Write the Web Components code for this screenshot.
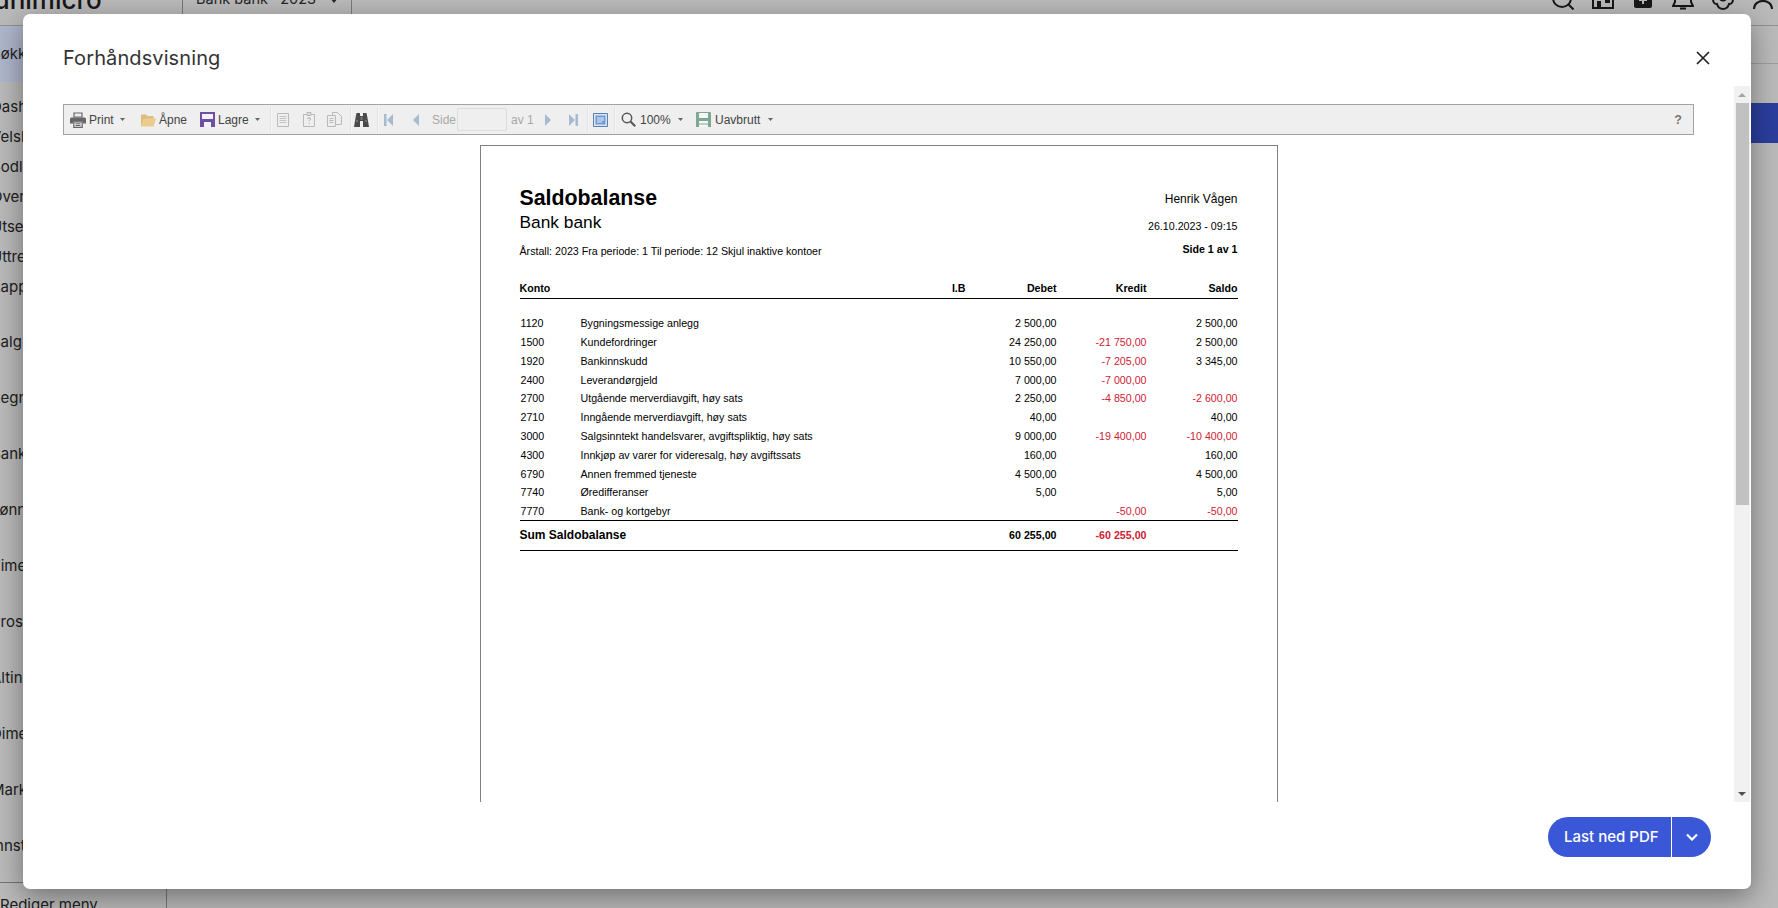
<!DOCTYPE html>
<html lang="no">
<head>
<meta charset="utf-8">
<title>Forhåndsvisning</title>
<style>
    html, body { margin: 0; height: 100%; overflow: hidden; background: #fff; }
</style>
</head>
<body>
<rs-app></rs-app>

<script>
class RsTopbar extends HTMLElement {
    constructor() {
        super();
        this.attachShadow({ mode: 'open' }).innerHTML = `
            <style>
                :host {
                    display: flex;
                    align-items: flex-end;
                    box-sizing: border-box;
                    height: 26px;
                    border-bottom: 1px solid #c8c8c8;
                    overflow: hidden;
                    font-family: Inter, sans-serif;
                    color: #222;
                }
                .logo {
                    width: 182px;
                    flex: none;
                    box-sizing: border-box;
                    margin-left: -6px;
                    margin-right: 6px;
                    font-size: 26px;
                    font-weight: 500;
                    line-height: 26px;
                    padding-bottom: 12px;
                }
                .company {
                    display: flex;
                    align-items: flex-end;
                    justify-content: space-between;
                    box-sizing: border-box;
                    width: 170px;
                    height: 25px;
                    padding: 0 13px 17px 13px;
                    border-left: 1px solid #a8a8a8;
                    border-right: 1px solid #a8a8a8;
                    font-size: 14.500px;
                    line-height: 18px;
                    color: #333;
                }
                .company svg { margin-bottom: 5px; }
                .icons {
                    margin-left: auto;
                    display: flex;
                    align-items: flex-end;
                    gap: 18px;
                    padding: 0 4px 15px 0;
                }
                .icons svg { display: block; width: 22px; height: 22px; }
            </style>
            <div class="logo">unimicro</div>
            <div class="company">
                <span>Bank bank · 2023</span>
                <svg width="8" height="5" viewBox="0 0 8 5"><path d="M0 0h8L4 5z" fill="#333"/></svg>
            </div>
            <div class="icons">
                <svg viewBox="0 0 22 22" fill="none" stroke="#222" stroke-width="2"><circle cx="10" cy="10" r="9"/><path d="M16.500 16.500L21.500 21.500"/></svg>
                <svg viewBox="0 0 22 22"><path d="M1 4h20v16H1z" fill="none" stroke="#222" stroke-width="2"/><path d="M5 13h4v7H5zM13 12h5v3h-5z" fill="#222"/></svg>
                <svg viewBox="0 0 22 22"><rect x="2" y="0" width="18" height="20" rx="2" fill="#222"/><path d="M11 8v8M7 12h8" stroke="#fff" stroke-width="2"/></svg>
                <svg viewBox="0 0 22 22" fill="none" stroke="#222" stroke-width="2"><path d="M3 0v14L1 18h20l-2-4V0"/><path d="M8 20.500h6"/></svg>
                <svg viewBox="0 0 22 22" fill="none" stroke="#222" stroke-width="2"><path d="M2 9C0 13 2 16.500 5 16C6 19.500 9 21 11 21C13 21 16 19.500 17 16C20 16.500 22 13 20 9"/><circle cx="11" cy="9" r="3.500"/></svg>
                <svg viewBox="0 0 22 22" fill="none" stroke="#222" stroke-width="2"><circle cx="11" cy="6" r="6"/><path d="M2 21c0-5 4-8 9-8s9 3 9 8"/></svg>
            </div>
        `;
    }
}
customElements.define('rs-topbar', RsTopbar);

class RsSidebar extends HTMLElement {
    constructor() {
        super();
        const sub = ['Dash', 'Velsk', 'Bodl', 'Over', 'Utse', 'Uttre', 'Rapp'];
        const main = ['Salg', 'Regn', 'Bank', 'Lønn', 'Time', 'Pros', 'Altin', 'Dime', 'Mark', 'Innst'];
        this.attachShadow({ mode: 'open' }).innerHTML = `
            <style>
                :host {
                    display: flex;
                    flex-direction: column;
                    box-sizing: border-box;
                    width: 167px;
                    flex: none;
                    border-right: 1px solid #a6a6a6;
                    font-family: Inter, sans-serif;
                    font-size: 15px;
                    color: #2c2c2c;
                    overflow: hidden;
                    white-space: nowrap;
                }
                /* sits above the backdrop, its tint is lighter than the dimmed page allows */
                .active {
                    position: relative;
                    z-index: 1;
                    height: 56px;
                    line-height: 56px;
                    background: #aeb6cb;
                    color: #222;
                }
                .sub { padding-top: 10px; padding-bottom: 12px; }
                .sub div { height: 30px; line-height: 30px; }
                .main { height: 56px; line-height: 56px; }
                span { margin-left: -9px; }
                .foot {
                    margin-top: 8px;
                    border-top: 1px solid #a0a0a0;
                    height: 40px;
                    line-height: 44px;
                }
            </style>
            <div class="active"><span>Bøkk</span></div>
            <div class="sub">${sub.map(t => `<div><span>${t}</span></div>`).join('')}</div>
            ${main.map(t => `<div class="main"><span>${t}</span></div>`).join('')}
            <div class="foot">Rediger meny</div>
        `;
    }
}
customElements.define('rs-sidebar', RsSidebar);

class RsApp extends HTMLElement {
    constructor() {
        super();
        this.attachShadow({ mode: 'open' }).innerHTML = `
            <style>
                :host {
                    display: flex;
                    flex-direction: column;
                    position: relative;
                    height: 908px;
                    overflow: hidden;
                    background: #fff;
                }
                .body { display: flex; flex: 1; min-height: 0; }
                .main { flex: 1; display: flex; flex-direction: column; align-items: flex-end; }
                .tabs { align-self: stretch; height: 37px; border-bottom: 1px solid #d8d8d8; flex: none; }
                .blue { margin-top: 39px; width: 180px; height: 40px; background: #3b56d8; flex: none; }
                .backdrop { position: absolute; inset: 0; background: rgba(0, 0, 0, .27); }
            </style>
            <rs-topbar></rs-topbar>
            <div class="body">
                <rs-sidebar></rs-sidebar>
                <div class="main">
                    <div class="tabs"></div>
                    <div class="blue"></div>
                </div>
            </div>
            <div class="backdrop"></div>
            <rs-modal heading="Forhåndsvisning">
                <rs-toolbar></rs-toolbar>
                <rs-report></rs-report>
                <rs-split-button slot="footer">Last ned PDF</rs-split-button>
            </rs-modal>
        `;
    }
}
customElements.define('rs-app', RsApp);

class RsModal extends HTMLElement {
    connectedCallback() {
        this.attachShadow({ mode: 'open' }).innerHTML = `
            <style>
                :host {
                    position: absolute;
                    z-index: 2;
                    left: 23px;
                    top: 14px;
                    width: 1728px;
                    height: 875px;
                    display: flex;
                    flex-direction: column;
                    background: #fff;
                    border-radius: 7px;
                    box-shadow: 0 8px 28px rgba(0, 0, 0, .4);
                    font-family: Inter, sans-serif;
                    overflow: hidden;
                }
                header {
                    flex: none;
                    height: 72px;
                    box-sizing: border-box;
                    display: flex;
                    align-items: center;
                    justify-content: space-between;
                    padding: 16px 41px 0 40px;
                    font-size: 20px;
                    letter-spacing: .1px;
                    color: #333;
                }
                header svg { display: block; }
                .body { flex: 1; min-height: 0; display: flex; }
                .content {
                    flex: 1;
                    min-width: 0;
                    padding: 18px 40px 0;
                    overflow: hidden;
                }
                footer {
                    flex: none;
                    height: 87px;
                    box-sizing: border-box;
                    display: flex;
                    justify-content: flex-end;
                    padding: 15px 40px 0;
                }
            </style>
            <header>
                <span>${this.getAttribute('heading')}</span>
                <svg width="14" height="14" viewBox="0 0 14 14" fill="none" stroke="#222" stroke-width="1.700"><path d="M1 1l12 12M13 1L1 13"/></svg>
            </header>
            <div class="body">
                <div class="content"><slot></slot></div>
                <rs-scrollbar></rs-scrollbar>
            </div>
            <footer><slot name="footer"></slot></footer>
        `;
    }
}
customElements.define('rs-modal', RsModal);

class RsScrollbar extends HTMLElement {
    constructor() {
        super();
        this.attachShadow({ mode: 'open' }).innerHTML = `
            <style>
                :host {
                    flex: none;
                    display: flex;
                    flex-direction: column;
                    align-items: center;
                    width: 16px;
                    margin-right: 1px;
                    background: #f1f1f1;
                }
                svg { display: block; flex: none; }
                .up { margin: 7px 0 6px; }
                .thumb { width: 13px; height: 402px; background: #c1c1c1; flex: none; }
                .down { margin: auto 0 6px; }
            </style>
            <svg class="up" width="8" height="4" viewBox="0 0 8 4"><path d="M0 4h8L4 0z" fill="#a3a3a3"/></svg>
            <div class="thumb"></div>
            <svg class="down" width="8" height="4" viewBox="0 0 8 4"><path d="M0 0h8L4 4z" fill="#505050"/></svg>
        `;
    }
}
customElements.define('rs-scrollbar', RsScrollbar);

class RsTool extends HTMLElement {
    connectedCallback() {
        const w = this.getAttribute('w');
        const off = this.hasAttribute('off');
        const gap = this.getAttribute('gap') || 3;
        this.attachShadow({ mode: 'open' }).innerHTML = `
            <style>
                :host {
                    display: flex;
                    align-items: center;
                    flex: none;
                    width: ${w}px;
                    height: 29px;
                    margin-left: ${this.getAttribute('ml') || 0}px;
                    font: 12px/14px "Liberation Sans", Arial, sans-serif;
                    color: ${off ? '#a8a8a8' : '#444'};
                }
                ::slotted(svg) { display: block; flex: none; }
                .label { margin-left: ${gap}px; white-space: nowrap; }
                .caret { margin-left: ${this.getAttribute('cm') || 6}px; flex: none; }
            </style>
            <slot></slot>
            ${this.hasAttribute('label') ? `<span class="label">${this.getAttribute('label')}</span>` : ''}
            ${this.hasAttribute('caret') ? `<svg class="caret" width="5" height="3" viewBox="0 0 5 3"><path d="M0 0h5L2.500 3z" fill="#666"/></svg>` : ''}
        `;
    }
}
customElements.define('rs-tool', RsTool);

class RsToolbar extends HTMLElement {
    constructor() {
        super();
        this.attachShadow({ mode: 'open' }).innerHTML = `
            <style>
                :host {
                    display: flex;
                    align-items: center;
                    box-sizing: border-box;
                    height: 31px;
                    padding-left: 6px;
                    background: #efefef;
                    border: 1px solid #a3a3a3;
                    font: 12px/14px "Liberation Sans", Arial, sans-serif;
                }
                .sep { flex: none; width: 1px; height: 25px; background: #e3e3e3; box-shadow: 1px 0 0 #f6f6f6; }
                .input {
                    flex: none;
                    box-sizing: border-box;
                    width: 50px;
                    height: 23px;
                    background: #efefef;
                    border: 1px solid #dcdcdc;
                    border-radius: 2px;
                }
                .help { margin-left: auto; margin-right: 11px; font-weight: bold; font-size: 12.500px; color: #777; }
            </style>

            <rs-tool w="70" label="Print" caret>
                <svg width="16" height="16" viewBox="0 0 16 16"><path d="M4 1h8v4H4z" fill="#eee" stroke="#666" stroke-width="1.200"/><path d="M1.500 5.500h13a1.500 1.500 0 0 1 1.500 1.500v4.500h-3V9.500H3v2H0V7a1.500 1.500 0 0 1 1.500-1.500z" fill="#666"/><path d="M3.800 9.800h8.400v5.600H3.800z" fill="#eee" stroke="#666" stroke-width="1.200"/><path d="M5.500 11.800h5M5.500 13.500h5" stroke="#666"/></svg>
            </rs-tool>
            <rs-tool w="60" label="Åpne">
                <svg width="16" height="16" viewBox="0 0 16 16"><path d="M1 2.500h5l1.500 1.500h6v3H4.200L1.500 14H1z" fill="#dcbd80"/><path d="M3.800 6.500H16L13.500 14.500H1z" fill="#eccb8c"/></svg>
            </rs-tool>
            <rs-tool w="70" label="Lagre" caret>
                <svg width="15" height="15" viewBox="0 0 15 15"><path d="M0 0h15v15H0z" fill="#6e4fa3"/><path d="M2 2h11v5H2z" fill="#f4f2f8"/><path d="M4 10h7v5H4z" fill="#f4f2f8"/></svg>
            </rs-tool>
            <span class="sep"></span>
            <rs-tool w="26" ml="6" off>
                <svg width="12" height="14" viewBox="0 0 12 14" fill="none" stroke="#b9b9b9"><path d="M.500.500h11v13H.500z"/><path d="M2.500 3.500h7M2.500 5.500h7M2.500 7.500h7M2.500 9.500h7" stroke="#c4c4c4"/></svg>
            </rs-tool>
            <rs-tool w="24" off>
                <svg width="12" height="15" viewBox="0 0 12 15" fill="none" stroke="#b9b9b9"><path d="M.500 2.500h11v12H.500z"/><path d="M4 .500h4v3H4z" fill="#ddd"/><path d="M4.500 7c.2-1.800 3-1.800 3 0 0 1.200-1.500 1.200-1.500 2.500M6 11v1" stroke="#aaa"/></svg>
            </rs-tool>
            <rs-tool w="23" off>
                <svg width="15" height="15" viewBox="0 0 15 15" fill="none" stroke="#b9b9b9"><path d="M5.500.500h5l4 4v8h-9z" fill="#eee"/><path d="M.500 3.500h8v11h-8z" fill="#eee"/><path d="M2.500 6.500h4M2.500 8.500h4M2.500 10.500h4"/></svg>
            </rs-tool>
            <span class="sep"></span>
            <rs-tool w="23" ml="3">
                <svg width="15" height="14" viewBox="0 0 15 14"><path d="M2.500 0h3.500v3h3V0h3.500L13.500 5 15 14H9V8H6v6H0L1.500 5z" fill="#4a4a4a"/><path d="M6.500 4h2v3h-2z" fill="#777"/><path d="M2 8h2M11 8h2" stroke="#999"/></svg>
            </rs-tool>
            <span class="sep"></span>
            <rs-tool w="28" ml="6">
                <svg width="9" height="12" viewBox="0 0 9 12" fill="#a6bad0"><path d="M0 0h2.500v12H0zM9 0v12L3 6z"/></svg>
            </rs-tool>
            <rs-tool w="20">
                <svg width="7" height="12" viewBox="0 0 7 12" fill="#a6bad0"><path d="M7 0v12L1 6z"/></svg>
            </rs-tool>
            <rs-tool w="25" label="Side" gap="0" off></rs-tool>
            <div class="input"></div>
            <rs-tool w="34" ml="4" label="av 1" gap="0" off></rs-tool>
            <rs-tool w="24">
                <svg width="7" height="12" viewBox="0 0 7 12" fill="#a6bad0"><path d="M0 0v12l6-6z"/></svg>
            </rs-tool>
            <rs-tool w="18">
                <svg width="9" height="12" viewBox="0 0 9 12" fill="#a6bad0"><path d="M0 0v12l6-6zM6.500 0H9v12H6.500z"/></svg>
            </rs-tool>
            <span class="sep"></span>
            <rs-tool w="21" ml="5">
                <svg width="15" height="14" viewBox="0 0 15 14"><path d="M.500.500h14v13H.500z" fill="#d8e4f2" stroke="#5a7fb5"/><path d="M2.500 2.500h10v9h-10z" fill="#6f9bd6"/><path d="M4 5h7M4 7h7M4 9h5" stroke="#eaf1fa"/></svg>
            </rs-tool>
            <span class="sep"></span>
            <rs-tool w="75" ml="6" label="100%" gap="4" caret cm="7.500">
                <svg width="15" height="15" viewBox="0 0 15 15" fill="none" stroke="#555"><circle cx="6" cy="6" r="4.700" stroke-width="1.500"/><path d="M9.500 9.500L14.200 14.200" stroke-width="2"/></svg>
            </rs-tool>
            <rs-tool w="90" label="Uavbrutt" gap="4" caret cm="7.500">
                <svg width="15" height="15" viewBox="0 0 15 15"><path d="M0 1a1 1 0 0 1 1-1h13a1 1 0 0 1 1 1v14H0z" fill="#7fa797"/><path d="M3 1h9v5H3z" fill="#f3f6f4"/><path d="M3 9h9v6H3z" fill="#f3f6f4"/><path d="M3 12h9" stroke="#7fa797"/></svg>
            </rs-tool>
            <span class="help">?</span>
        `;
    }
}
customElements.define('rs-toolbar', RsToolbar);

class RsRow extends HTMLElement {
    connectedCallback() {
        const cells = JSON.parse(this.getAttribute('cells'));
        const kind = this.getAttribute('kind') || 'line';
        const money = v => `<span class="n ${v.startsWith('-') ? 'neg' : ''}">${v}</span>`;
        this.attachShadow({ mode: 'open' }).innerHTML = `
            <style>
                :host {
                    display: grid;
                    grid-template-columns: 61px 325px 60px 91px 90px 91px;
                    align-items: center;
                    box-sizing: border-box;
                    height: 18.800px;
                    font: 10.670px/14px "Liberation Sans", Arial, sans-serif;
                    color: #000;
                    white-space: nowrap;
                }
                :host([kind="head"]) { height: 18px; padding-bottom: 3px; border-bottom: 1px solid #000; font-weight: bold; }
                :host([kind="sum"]) { height: 31px; margin-top: -1px; border-top: 1px solid #000; border-bottom: 1px solid #000; font-weight: bold; }
                :host([kind="line"]) .code { padding-left: 1px; }
                .label { grid-column: 1 / span 2; }
                .n { text-align: right; }
                .neg { color: #cf2233; }
                :host([kind="sum"]) .label { font-size: 12px; }
            </style>
            ${kind === 'line'
                ? `<span class="code">${cells[0]}</span><span>${cells[1]}</span>`
                : `<span class="label">${cells[0]}</span>`}
            ${cells.slice(kind === 'line' ? 2 : 1).map(money).join('')}
        `;
    }
}
customElements.define('rs-row', RsRow);

class RsReport extends HTMLElement {
    constructor() {
        super();
        const rows = [
            ['1120', 'Bygningsmessige anlegg', '', '2 500,00', '', '2 500,00'],
            ['1500', 'Kundefordringer', '', '24 250,00', '-21 750,00', '2 500,00'],
            ['1920', 'Bankinnskudd', '', '10 550,00', '-7 205,00', '3 345,00'],
            ['2400', 'Leverandørgjeld', '', '7 000,00', '-7 000,00', ''],
            ['2700', 'Utgående merverdiavgift, høy sats', '', '2 250,00', '-4 850,00', '-2 600,00'],
            ['2710', 'Inngående merverdiavgift, høy sats', '', '40,00', '', '40,00'],
            ['3000', 'Salgsinntekt handelsvarer, avgiftspliktig, høy sats', '', '9 000,00', '-19 400,00', '-10 400,00'],
            ['4300', 'Innkjøp av varer for videresalg, høy avgiftssats', '', '160,00', '', '160,00'],
            ['6790', 'Annen fremmed tjeneste', '', '4 500,00', '', '4 500,00'],
            ['7740', 'Øredifferanser', '', '5,00', '', '5,00'],
            ['7770', 'Bank- og kortgebyr', '', '', '-50,00', '-50,00']
        ];
        const attr = a => JSON.stringify(a).replace(/"/g, '&quot;');
        this.attachShadow({ mode: 'open' }).innerHTML = `
            <style>
                :host {
                    display: block;
                    box-sizing: border-box;
                    width: 798px;
                    height: 800px;
                    margin: 10px auto 0;
                    padding: 39px 39px 0;
                    background: #fff;
                    border: 1px solid #808080;
                    font-family: "Liberation Sans", Arial, sans-serif;
                    color: #000;
                }
                .top { display: flex; justify-content: space-between; height: 73px; }
                h1 { margin: 1px 0 0; font-size: 21.330px; line-height: 24px; font-weight: bold; }
                h2 { margin: 1px 0 0; font-size: 17.330px; line-height: 22px; font-weight: normal; }
                .filter { margin-top: 11px; font-size: 10.670px; line-height: 14px; }
                .meta { display: flex; flex-direction: column; align-items: flex-end; }
                .user { font-size: 12px; line-height: 28px; }
                .date { margin-top: 6px; font-size: 10.670px; line-height: 14px; }
                .page { margin-top: 9px; font-size: 10.670px; line-height: 14px; font-weight: bold; }
                .head { margin-top: 23px; }
                .rows { margin-top: 14.800px; }
            </style>
            <div class="top">
                <div>
                    <h1>Saldobalanse</h1>
                    <h2>Bank bank</h2>
                    <div class="filter">Årstall: 2023 Fra periode: 1 Til periode: 12 Skjul inaktive kontoer</div>
                </div>
                <div class="meta">
                    <div class="user">Henrik Vågen</div>
                    <div class="date">26.10.2023 - 09:15</div>
                    <div class="page">Side 1 av 1</div>
                </div>
            </div>
            <rs-row class="head" kind="head" cells="${attr(['Konto', 'I.B', 'Debet', 'Kredit', 'Saldo'])}"></rs-row>
            <div class="rows">
                ${rows.map(r => `<rs-row kind="line" cells="${attr(r)}"></rs-row>`).join('')}
            </div>
            <rs-row kind="sum" cells="${attr(['Sum Saldobalanse', '', '60 255,00', '-60 255,00', ''])}"></rs-row>
        `;
    }
}
customElements.define('rs-report', RsReport);

class RsSplitButton extends HTMLElement {
    constructor() {
        super();
        this.attachShadow({ mode: 'open' }).innerHTML = `
            <style>
                :host {
                    display: flex;
                    height: 40px;
                    color: #fff;
                    font: 500 15px/40px Inter, sans-serif;
                    white-space: nowrap;
                }
                .main {
                    box-sizing: border-box;
                    width: 124px;
                    padding-left: 16px;
                    background: #3a57d7;
                    border-radius: 20px 0 0 20px;
                    border-right: 1px solid #fff;
                }
                .more {
                    width: 39px;
                    display: flex;
                    align-items: center;
                    justify-content: center;
                    background: #3a57d7;
                    border-radius: 0 20px 20px 0;
                }
            </style>
            <div class="main"><slot></slot></div>
            <div class="more">
                <svg width="12" height="8" viewBox="0 0 12 8" fill="none" stroke="#fff" stroke-width="2.200"><path d="M1 1.500l5 5 5-5"/></svg>
            </div>
        `;
    }
}
customElements.define('rs-split-button', RsSplitButton);
</script>
</body>
</html>
